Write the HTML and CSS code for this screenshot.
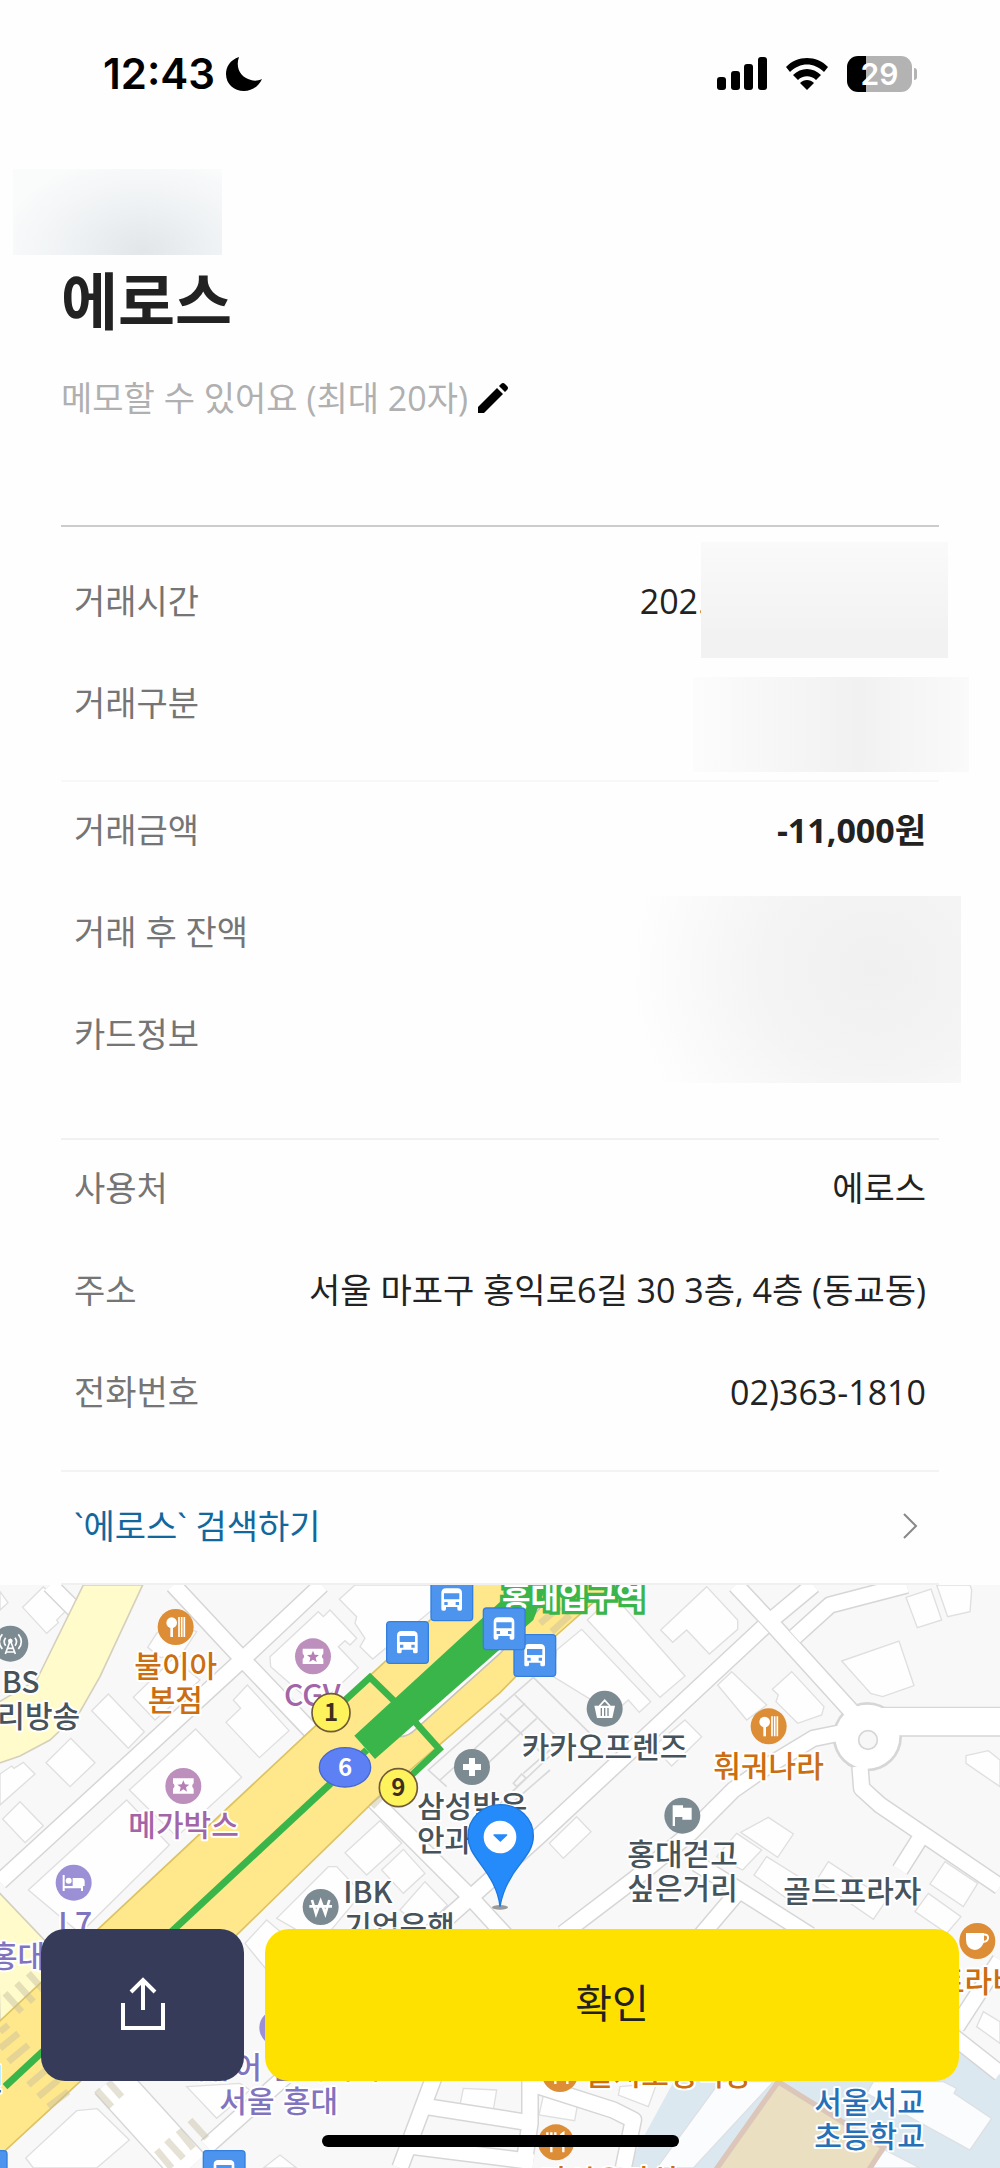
FILE: index.html
```html
<!DOCTYPE html>
<html lang="ko">
<head>
  <meta charset="UTF-8" />
  <meta name="viewport" content="width=device-width, initial-scale=1" />
  <title>에로스</title>
  <link rel="stylesheet" href="styles.css">
</head>
<body>

<!-- Status bar -->
<header class="status-bar">
  <div class="status-left">
    <span class="clock">12:43</span>
    <svg class="moon" viewBox="0 0 36 34"><path d="M13 0C4 3 0 10 0 17c0 10 8 17 18 17 8 0 15-5 18-12-4 2-8 2-11 1C15 21 9 11 13 0z"/></svg>
  </div>
  <div class="status-right">
    <svg class="signal" viewBox="0 0 50 34">
      <rect x="0" y="20" width="9" height="13" rx="3"/>
      <rect x="14" y="14" width="9" height="19" rx="3"/>
      <rect x="27" y="7" width="9" height="26" rx="3"/>
      <rect x="41" y="0" width="9" height="33" rx="3"/>
    </svg>
    <svg class="wifi" viewBox="0 0 42 34">
      <path d="M0 10C11-2 31-2 42 10l-4 5C28 5 14 5 4 15z"/>
      <path d="M7 18c8-8 20-8 28 0l-5 5c-5-5-13-5-18 0z"/>
      <path d="M14 26c4-4 10-4 14 0l-7 7z"/>
    </svg>
    <div class="battery"><span class="battery-level">29</span></div>
  </div>
</header>

<main>
  <!-- Merchant -->
  <section class="merchant">
    <div class="logo-mask"></div>
    <h1>에로스</h1>
    <button class="memo" type="button">
      <span>메모할 수 있어요 (최대 20자)</span>
      <svg class="pencil" viewBox="0 0 30 30"><path d="M0 24 19 5l6 6L6 30H0zM21 3l2-2q2-2 4 0l2 2q2 2 0 4l-2 2z"/></svg>
    </button>
  </section>

  <!-- Transaction details -->
  <dl class="group group-time">
    <div class="row">
      <dt>거래시간</dt>
      <dd class="masked-time">202.</dd>
      <span class="mask mask-time"></span>
    </div>
    <div class="row">
      <dt>거래구분</dt>
      <dd></dd>
      <span class="mask mask-type"></span>
    </div>
  </dl>

  <dl class="group group-amount">
    <div class="row">
      <dt>거래금액</dt>
      <dd class="amount">-11,000원</dd>
    </div>
    <div class="row">
      <dt>거래 후 잔액</dt>
      <dd></dd>
      <span class="mask mask-card"></span>
    </div>
    <div class="row">
      <dt>카드정보</dt>
      <dd></dd>
    </div>
  </dl>

  <dl class="group group-place">
    <div class="row">
      <dt>사용처</dt>
      <dd>에로스</dd>
    </div>
    <div class="row">
      <dt>주소</dt>
      <dd>서울 마포구 홍익로6길 30 3층, 4층 (동교동)</dd>
    </div>
    <div class="row">
      <dt>전화번호</dt>
      <dd>02)363-1810</dd>
    </div>
  </dl>

  <a class="search-link" href="#">
    <span>`에로스` 검색하기</span>
    <svg class="chevron" viewBox="0 0 16 26"><path d="M2 1l12 12L2 25"/></svg>
  </a>
</main>

<!-- Map -->
<section class="map">
  <svg viewBox="0 45 3000 1749" preserveAspectRatio="xMidYMin slice" role="img" aria-label="지도">
    <defs>
      <g id="bus">
        <rect class="bus-bg" x="2" y="2" width="125" height="125" rx="10"/>
        <path fill="#fff" fill-rule="evenodd" d="M33 92V44q0-14 14-14h34q14 0 14 14v48q0 5-5 5h-4q-5 0-5-5v-6H47v6q0 5-5 5h-4q-5 0-5-5zM41 45h46v18H41zM42 71h10v9H42zM76 71h10v9H76z"/>
      </g>
      <g id="food">
        <circle r="54" fill="#dc8d35"/>
        <circle cx="-12" cy="-13" r="16" fill="#fff"/>
        <path stroke="#fff" stroke-width="8" d="M-12 0V30"/>
        <path stroke="#fff" stroke-width="5" d="M10-30V30M18-30V30M26-30V30"/>
      </g>
      <g id="fork">
        <circle r="54" fill="#dc8d35"/>
        <path fill="none" stroke="#fff" stroke-width="7" d="M-14 30V-30M-26-30v18q0 10 12 10t12-10v-18M22 30V-28Q8-20 10 4h12"/>
      </g>
      <g id="ticket">
        <circle r="54" fill="#bd8fbd"/>
        <path fill="#fff" d="M-31-23h62v15q-9 8 0 16v15h-62V8q9-8 0-16z"/>
        <path fill="#b57fb5" d="M0-17 5-5l13 1-10 8 3 13L0 10l-11 7 3-13-10-8 13-1z"/>
      </g>
    </defs>

    <!-- Blocks -->
    <rect class="land" y="45" width="3000" height="1749"/>
    <path class="school" d="M2040 1500 1880 1794H3000V1515L2870 1425 2700 1480z"/>
    <path fill="#fbfcfe" stroke="#dde0e4" stroke-width="4" d="M2160 1535H2320L2080 1794H1970z"/>
    <path fill="#fbfcfe" stroke="#dde0e4" stroke-width="4" d="M2620 1535H2830L2870 1555 2862 1570 2975 1645 2910 1740 2600 1570z"/>
    <path fill="#fbfcfe" stroke="#dde0e4" stroke-width="4" d="M2655 1740 2760 1794H2610z"/>
    <path fill="#eadfc1" stroke="#dbc6b9" stroke-width="16" d="M2335 1535 2650 1732 2600 1810H2140z"/>

    <!-- Buildings -->
    <g class="building">
      <path d="M130 50 200 120 170 150 175 158 140 190 68 112zM0 65 24 98 0 120z"/>
      <path d="M325 372 433 485 385 535 275 422zM212 505 285 578 210 650 138 578zM60 695 130 767 75 818 8 747z"/>
      <path d="M0 612 35 588 42 595 70 577 105 612 0 705zM400 382 520 265 600 330 465 450z"/>
      <path d="M443 232 470 190 510 160 590 185 540 260 480 262zM742 345 867 482 778 563 678 457 722 415 700 390z"/>
      <path d="M587 477 725 622 530 800 388 660zM380 690 508 825 240 1090 85 960z"/>
      <path d="M810 260 955 125 970 140 990 120 1070 205 1050 225 1035 212 1015 230 1075 293 950 410 812 290z"/>
      <path d="M1018 88 1065 45H1390L1290 125 1118 267 1080 230 1095 205 1065 160 1070 140z"/>
      <path d="M1140 752 1205 820 1100 915 1035 848zM1210 838 1275 910 1210 970 1145 900zM1275 935 1342 1005 1270 1080 1200 1020z"/>
      <path d="M985 890H1010L1085 970 960 1120 830 1045zM1670 240 1745 178 1952 395 1918 427 1885 390 1840 430 1660 320z"/>
      <path d="M1762 150 1840 75 2055 318 1980 382zM2120 50 2213 150V178L2128 252 2060 180 2018 217 1982 180z"/>
      <path d="M2055 450 2105 500 2015 588 1960 530zM2195 305 2300 405 2240 450 2153 345zM2375 305 2472 410 2465 435 2393 460 2328 395 2335 375 2317 358z"/>
      <path d="M2525 273 2697 213 2742 347 2648 380 2612 370zM2718 82 2793 57 2825 150 2752 173zM2810 45H2910L2915 60 2910 125 2843 140z"/>
      <path d="M2898 557 2965 542 3000 570V650L2898 580zM1730 740 1773 785 1690 865 1648 820z"/>
      <path d="M2305 742 2380 792 2333 862 2222 787zM2210 790 2285 840 2228 900 2150 860zM2300 860 2420 935 2380 1000 2262 915z"/>
      <path d="M2485 875 2660 990 2620 1048 2450 930zM2835 875 2933 940 2890 1010 2790 942zM2785 970 2883 1040 2840 1090 2745 1025z"/>
      <path d="M800 1050 870 1110 800 1200 735 1120zM2950 1325 3000 1355V1420L2930 1370z"/>
      <path d="M230 1622 292 1616 388 1710 290 1794H100L77 1764zM1632 1568 1736 1585 1724 1652 1617 1635zM1390 1555 1490 1560 1480 1620 1380 1605z"/>
      <path d="M840 1755 890 1794H790zM560 1550 720 1540 750 1560 650 1645zM1860 1550 1970 1540 1945 1610 1855 1575z"/>
    </g>

    <!-- Minor streets -->
    <g class="street street-edge">
      <path d="M0 935 728 268 965 45M520 45 728 268 935 485M150 45 250 145M2290 172 1610 805 1420 975M2207 45 2310 155 2560 430M2320 145 2440 45M2385 200 2490 105 2720 45M2540 485 2440 505 2300 590 2200 660 2070 790 1900 930 1690 1090M2580 590 2585 655 2640 705 3000 950M2760 805 2700 900M2090 880 2430 1095M2210 970 2100 1100M1120 690 1405 975 1520 1100M1420 975 1290 1090M620 1730 900 1480M1200 1794 1310 1500M1280 1610 1600 1660M1240 1730 1600 1775M1590 1500V1660L1570 1794M1590 1540 1840 1620 1900 1650 1870 1794M3000 1170 2870 1370M2860 1400 3000 1510"/>
      <path stroke-width="125" d="M330 1530 570 1794"/>
      <circle cx="2602" cy="500" r="104"/>
      <path stroke-width="90" d="M2600 455H3010"/>
    </g>
    <g class="street street-fill">
      <path d="M0 935 728 268 965 45M520 45 728 268 935 485M150 45 250 145M2290 172 1610 805 1420 975M2207 45 2310 155 2560 430M2320 145 2440 45M2385 200 2490 105 2720 45M2540 485 2440 505 2300 590 2200 660 2070 790 1900 930 1690 1090M2580 590 2585 655 2640 705 3000 950M2760 805 2700 900M2090 880 2430 1095M2210 970 2100 1100M1120 690 1405 975 1520 1100M1420 975 1290 1090M620 1730 900 1480M1200 1794 1310 1500M1280 1610 1600 1660M1240 1730 1600 1775M1590 1500V1660L1570 1794M1590 1540 1840 1620 1900 1650 1870 1794M3000 1170 2870 1370M2860 1400 3000 1510"/>
      <path stroke-width="117" d="M330 1530 570 1794"/>
      <circle cx="2602" cy="500" r="96"/>
      <path stroke-width="82" d="M2600 455H3010"/>
    </g>
    <circle cx="2604" cy="510" r="28" fill="#f7f7f7" stroke="#d6d6d6" stroke-width="5"/>
    <g class="alley">
      <path d="M1600 322 1770 490M1600 322 1285 600 1340 650M1545 375 1690 520 1500 700M1500 430 1620 545M1575 400 1320 630M1610 445 1420 620M1570 610 1650 540M1650 600 1500 730M1540 640 1565 612 1578 625 1550 650z"/>
    </g>

    <!-- Main roads -->
    <path class="road-light" d="M250 45 110 330 -10 400V582L60 558 150 510 240 425 300 320 428 45z"/>
    <path class="road-light" d="M-10 960 200 1180 0 1360z"/>
    <path class="road-main" d="M-10 1362 915 497 1155 275 1410 40H1845L1670 195 1500 368 1115 700 715 1090 240 1535 -10 1765z"/>
    <path fill="#fff" stroke="#c9c4b8" stroke-width="5" d="M1200 500Q1225 500 1250 475L1500 250 1560 185 1640 90"/>
    <g class="crossing">
      <path d="M85 1210 130 1260M50 1240 100 1295M15 1270 65 1325M0 1385 25 1365M0 1435 55 1390M25 1475 85 1425M85 1545 150 1490M115 1580 175 1530M145 1610 205 1565M290 1560 335 1610M325 1535 365 1580M470 1740 515 1794M500 1710 550 1765M535 1680 580 1735M570 1650 620 1705M1620 160 1680 110M1655 185 1710 135M1115 710 1150 675"/>
    </g>

    <!-- Subway line -->
    <path class="platform-track" d="M1063 497 1555 45H1640L1600 150 1125 567z"/>
    <g class="subway">
      <path stroke-width="21" d="M15 1550 1100 540"/>
      <path stroke-width="20" d="M1030 395 1110 322 1190 400M1240 450 1318 537 1230 620"/>
    </g>

    <!-- Places -->
    <use href="#food" x="527" y="171"/>
    <use href="#food" x="2306" y="469"/>
    <use href="#fork" x="1680" y="1512"/>
    <use href="#fork" x="1668" y="1717"/>
    <use href="#ticket" x="939" y="259"/>
    <use href="#ticket" x="550" y="648"/>
    <g transform="translate(31 221)">
      <circle r="54" fill="#7c8b92"/>
      <path fill="none" stroke="#fff" stroke-width="5" d="M-15 31 0-10 15 31M-9 14H9M-12 25H12M-14-18q-9 12 0 24M14-18q9 12 0 24M-24-28q-18 22 0 44M24-28q18 22 0 44"/>
      <circle cy="-8" r="7" fill="#fff"/>
    </g>
    <g transform="translate(1416 591)">
      <circle r="54" fill="#7c8b92"/>
      <path stroke="#fff" stroke-width="18" d="M0-27V27M-27 0H27"/>
    </g>
    <g transform="translate(1814 416)">
      <circle r="54" fill="#7c8b92"/>
      <path fill="#fff" d="M-31-9H31L23 28H-23z"/>
      <path fill="none" stroke="#fff" stroke-width="5" d="M-16-8 0-25 16-8"/>
      <path stroke="#7c8b92" stroke-width="4" d="M-10-2V22M0-2V22M10-2V22"/>
    </g>
    <g transform="translate(2047 737)">
      <circle r="54" fill="#7c8b92"/>
      <path fill="#fff" d="M-29-31H2V-24H28V12H0V4H-22V31H-29z"/>
    </g>
    <g transform="translate(962 1011)">
      <circle r="54" fill="#7c8b92"/>
      <path fill="none" stroke="#fff" stroke-width="8" d="M-26-21-14 20 0-18 14 20 26-21M-34-2H34"/>
    </g>
    <g transform="translate(221 938)">
      <circle r="54" fill="#9b90d6"/>
      <path fill="#fff" d="M-33-23h6V10H28V25H22V17H-27V25H-33zM-3-14H22Q33-14 33-4V10H-3z"/>
      <circle cx="-15" cy="-6" r="9" fill="#fff"/>
    </g>
    <circle cx="832" cy="1373" r="54" fill="#9b90d6"/>
    <g transform="translate(2932 1113)">
      <circle r="54" fill="#dc8d35"/>
      <path fill="#fff" d="M-34-24H20V4Q10 27-8 27-34 22-34-4z"/>
      <path fill="none" stroke="#fff" stroke-width="6" d="M15-19Q34-22 32-8 30 4 12 2"/>
    </g>

    <g class="label">
      <text x="5" y="370">BS</text>
      <text x="-8" y="471">리방송</text>
      <text x="1565" y="565">카카오프렌즈</text>
      <text x="1882" y="885">홍대걷고</text>
      <text x="1882" y="986">싶은거리</text>
      <text x="2350" y="995">골드프라자</text>
      <text x="1251" y="742">삼성밝은</text>
      <text x="1251" y="843">안과</text>
      <text x="1030" y="998">IBK</text>
      <text x="1033" y="1100">기업은행</text>
      <text x="-72" y="1560">인</text>
    </g>
    <g class="label orange">
      <text x="403" y="320">불이아</text>
      <text x="443" y="422">본점</text>
      <text x="2140" y="620">훠궈나라</text>
      <text x="2811" y="1265">트라비</text>
      <text x="1758" y="1546">을지오뎅식당</text>
      <text x="1620" y="1862">마시오가식</text>
    </g>
    <g class="label purple">
      <text x="852" y="408">CGV</text>
      <text x="385" y="798">메가박스</text>
    </g>
    <g class="label violet">
      <text x="175" y="1091">L7</text>
      <text x="-30" y="1192">홍대</text>
      <text x="537" y="1525">머큐어 앰배서더</text>
      <text x="658" y="1627">서울 홍대</text>
    </g>
    <g class="label blue">
      <text x="2443" y="1630">서울서교</text>
      <text x="2443" y="1732">초등학교</text>
    </g>
    <text class="station" x="1506" y="115">홍대입구역</text>

    <!-- Bus stops -->
    <use href="#bus" x="1291" y="25"/>
    <use href="#bus" x="1158" y="153"/>
    <use href="#bus" x="1540" y="192"/>
    <use href="#bus" x="1448" y="112"/>
    <use href="#bus" x="608" y="1740"/>
    <use href="#bus" x="-106" y="1740"/>

    <!-- Station exits -->
    <g class="exit">
      <circle cx="993" cy="428" r="57"/>
      <circle cx="1195" cy="653" r="57"/>
      <ellipse class="platform" cx="1035" cy="592" rx="77" ry="59"/>
      <text x="993" y="454">1</text>
      <text x="1195" y="679">9</text>
      <text class="platform-no" x="1035" y="618">6</text>
    </g>

    <!-- Current place pin -->
    <ellipse cx="1500" cy="1012" rx="24" ry="7" fill="#999"/>
    <path fill="#258bfa" stroke="#1d78de" stroke-width="4" d="M1500 1010C1495 960 1470 920 1440 880 1418 850 1404 830 1404 798 1404 745 1447 704 1502 704S1600 745 1600 798C1600 830 1584 852 1562 880 1530 920 1508 960 1500 1010z"/>
    <circle cx="1500" cy="801" r="49" fill="#fff"/>
    <path fill="#258bfa" stroke="#258bfa" stroke-width="4" stroke-linejoin="round" d="M1482 795H1520L1501 813z"/>
  </svg>
</section>

<!-- Bottom actions -->
<footer class="actions">
  <div class="buttons">
    <button class="share" type="button" aria-label="공유">
      <svg viewBox="0 0 46 56"><path d="M3 26V51H43V26M23 33V4M11 15 23 3 35 15"/></svg>
    </button>
    <button class="confirm" type="button">확인</button>
  </div>
  <div class="home-indicator"></div>
</footer>

</body>
</html>
```

FILE: styles.css
```css
* {
  box-sizing: border-box;
}

body {
  margin: 0;
  min-height: 100vh;
  display: flex;
  flex-direction: column;
  background: #fefefe;
  color: #222;
  font-family: "Open Sans", "Noto Sans CJK KR", sans-serif;
  font-size: 34px;
  line-height: 52px;
}

button {
  border: none;
  padding: 0;
  font: inherit;
  cursor: pointer;
}

/* Status bar */
.status-bar {
  display: flex;
  justify-content: space-between;
  align-items: center;
  height: 148px;
  padding: 0 88px 0 103px;
}
.status-left,
.status-right {
  display: flex;
  align-items: center;
}
.clock {
  color: #000;
  font-family: Inter, sans-serif;
  font-size: 42px;
  font-weight: 600;
}
.moon {
  width: 36px;
  height: 34px;
  margin-left: 11px;
}
.status-right {
  gap: 19px;
}
.signal {
  width: 50px;
  height: 34px;
}
.wifi {
  width: 42px;
  height: 34px;
}
.battery {
  position: relative;
  width: 65px;
  height: 36px;
  border-radius: 11px;
  background: linear-gradient(to right, #000 29%, #b3b3b3 29%);
  color: #fff;
  font-family: Inter, sans-serif;
  font-size: 30px;
  font-weight: 600;
  line-height: 36px;
  text-align: center;
}
.battery::after {
  content: "";
  position: absolute;
  right: -5px;
  top: 12px;
  width: 3px;
  height: 12px;
  border-radius: 0 3px 3px 0;
  background: #b3b3b3;
}

/* Merchant */
.merchant {
  padding: 21px 61px 0;
}
.logo-mask {
  width: 209px;
  height: 86px;
  margin-left: -48px;
  background: radial-gradient(ellipse 70% 110% at 62% 95%, #e2e6e9, #eff2f4 50%, #fafbfb 100%);
}
h1 {
  margin: 4px 0 0;
  font-size: 62px;
  font-weight: 700;
  line-height: 84px;
}
.memo {
  display: flex;
  align-items: center;
  gap: 10px;
  margin: 29px 0 101px;
  background: none;
  color: #b0b0b0;
}
.pencil {
  width: 30px;
  height: 30px;
}

/* Detail rows */
.group {
  display: flex;
  flex-direction: column;
  gap: 50px;
  margin: 0 61px;
  padding: 0 13px;
  border-top: 2px solid #f1f1f1;
}
.group-time {
  padding-top: 48px;
  padding-bottom: 51px;
  border-color: #ccc;
}
.group-amount {
  padding-top: 22px;
  padding-bottom: 78px;
  border-color: #f8f8f8;
}
.group-place {
  padding-top: 22px;
  padding-bottom: 52px;
}
.row {
  position: relative;
  display: flex;
  justify-content: space-between;
}
dt {
  color: #757575;
}
dd {
  margin: 0;
}
.amount {
  font-weight: 700;
}
.masked-time {
  padding-right: 219px;
}

/* Blurred-out private values */
.mask {
  position: absolute;
}
.mask-time {
  top: -33px;
  right: -22px;
  width: 247px;
  height: 116px;
  background: linear-gradient(#fafafa, #f2f2f2 80%);
}
.mask-type {
  top: 0;
  right: -43px;
  width: 276px;
  height: 95px;
  background: linear-gradient(to right, #fcfcfc, #f1f1f1 60%, #fafafa);
}
.mask-card {
  top: -10px;
  right: -35px;
  width: 349px;
  height: 187px;
  background: radial-gradient(ellipse 70% 120% at 75% 40%, #f0f0f0, #f4f4f4 45%, #fefefe);
}

.search-link {
  display: flex;
  justify-content: space-between;
  align-items: center;
  height: 115px;
  margin: 0 61px;
  padding: 0 21px 4px 13px;
  border-top: 2px solid #f3f3f3;
  border-bottom: 2px solid #f0f0f0;
  color: #12689d;
  text-decoration: none;
}
.chevron {
  width: 16px;
  height: 26px;
  fill: none;
  stroke: #888;
  stroke-width: 2;
}

/* Map */
.map {
  flex: 1;
  position: relative;
  min-height: 480px;
  overflow: hidden;
}
.map > svg {
  position: absolute;
  width: 100%;
  height: 100%;
}
.land {
  fill: #f8f8f8;
}
.school {
  fill: #dce8ef;
}
.building path {
  fill: #fefefe;
  stroke: #dfdfdf;
  stroke-width: 4;
}
.street {
  fill: none;
  stroke-linejoin: round;
}
.street-edge {
  stroke: #d6d6d6;
  stroke-width: 54;
}
.street-fill {
  stroke: #fff;
  stroke-width: 45;
}
.street-edge circle {
  fill: #d6d6d6;
  stroke: none;
}
.street-fill circle {
  fill: #fff;
  stroke: none;
}
.alley path {
  fill: none;
  stroke: #d9d9d9;
  stroke-width: 5;
}
.road-light {
  fill: #fffbcb;
  stroke: #d5d0be;
  stroke-width: 5;
}
.road-main {
  fill: #ffe88b;
  stroke: #dcc364;
  stroke-width: 5;
}
.crossing path {
  stroke: #c6bd9f;
  stroke-opacity: 0.45;
  stroke-width: 20;
}
.platform-track {
  fill: #3ab54a;
}
.subway path {
  fill: none;
  stroke: #3ab54a;
}
.label text {
  fill: #47535a;
  stroke: #fff;
  stroke-width: 12;
  stroke-linejoin: round;
  paint-order: stroke;
  font-family: "Noto Sans CJK KR", sans-serif;
  font-size: 90px;
  font-weight: 500;
}
.orange text {
  fill: #cb6d11;
}
.purple text {
  fill: #a265a8;
}
.violet text {
  fill: #8174bf;
}
.blue text {
  fill: #2670b8;
}
.station {
  fill: #fff;
  stroke: #3ab54a;
  stroke-width: 20;
  paint-order: stroke;
  font-family: "Noto Sans CJK KR", sans-serif;
  font-size: 93px;
  font-weight: 700;
}
.bus-bg {
  fill: #4d94ef;
  stroke: #347fdc;
  stroke-width: 4;
}
.exit circle {
  fill: #fff35c;
  stroke: #6f5b3c;
  stroke-width: 5;
}
.exit .platform {
  fill: #5d80f5;
  stroke: #4668d2;
  stroke-width: 4;
}
.exit text {
  fill: #3d2e1e;
  font-family: "Noto Sans CJK KR", sans-serif;
  font-size: 72px;
  font-weight: 700;
  text-anchor: middle;
}
.exit .platform-no {
  fill: #fff;
}

/* Bottom actions */
.actions {
  position: fixed;
  left: 0;
  right: 0;
  bottom: 0;
  padding: 0 41px 21px;
}
.buttons {
  display: flex;
  gap: 21px;
}
.share,
.confirm {
  height: 152px;
  border-radius: 24px;
}
.share {
  display: flex;
  justify-content: center;
  align-items: center;
  width: 203px;
  background: #353b59;
}
.share svg {
  width: 46px;
  height: 56px;
  fill: none;
  stroke: #fff;
  stroke-width: 4;
}
.confirm {
  flex: 1;
  padding-bottom: 4px;
  background: #ffe100;
  color: #222;
  font-size: 40px;
}
.home-indicator {
  width: 357px;
  height: 12px;
  margin: 54px auto 0;
  border-radius: 6px;
  background: #000;
}
```
